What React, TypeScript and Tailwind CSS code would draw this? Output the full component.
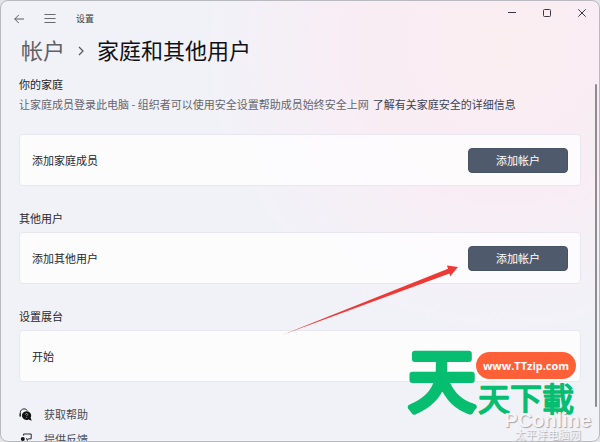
import type { ReactNode } from 'react';

const ArrowLeftIcon = () => (
  <svg width="12" height="12" viewBox="0 0 12 12" fill="none" stroke="#5b5b61" strokeLinecap="round" strokeLinejoin="round">
    <path d="M5.5 2.2L1.8 6L5.5 9.8" />
    <path d="M2 6H10.6" />
  </svg>
);

const MenuIcon = () => (
  <svg width="12" height="12" viewBox="0 0 12 12" stroke="#6a6a70" strokeLinecap="round">
    <path d="M0.8 1.5H11.2M0.8 5.5H11.2M0.8 9.5H11.2" />
  </svg>
);

// ヘルプ（ヘッドセットと吹き出し）
const HelpIcon = () => (
  <svg width="13" height="13" viewBox="0 0 13 13">
    <path d="M1.3 8.2V4.8C1.3 2.4 3 0.9 5 0.9C6.6 0.9 7.7 1.5 8.3 2.6" fill="none" stroke="#2a2a2e" />
    <path d="M0.5 5.6H2V8.6H0.5Z" fill="#2a2a2e" />
    <path d="M7.6 3.2a4.4 4.4 0 1 0 1.8 8.3l3.4 1.2l-1.2-3A4.4 4.4 0 0 0 7.6 3.2Z" fill="#121214" />
    <path d="M6.4 6.5C6.4 5.1 8.7 5.1 8.7 6.5C8.7 7.2 7.6 7.2 7.6 8.2M7.6 9.1V9.9" fill="none" stroke="#b8b8bc" strokeWidth="0.8" />
  </svg>
);

// フィードバック（人と吹き出し）
const FeedbackIcon = () => (
  <svg width="13" height="13" viewBox="0 0 13 13">
    <path d="M4.6 2.6V1H12.2V5.8H9.8L8.2 7.4V5.8H7" fill="none" stroke="#2a2a2e" strokeLinejoin="round" />
    <circle cx="3.8" cy="5.9" r="2" fill="#121214" />
    <path d="M0.8 9H6.8V10.4C6.8 13 0.8 13 0.8 10.4Z" fill="#121214" />
  </svg>
);

// サイトロゴ
const SiteLogo = ({ className }: { className?: string }) => (
  <svg width="174" height="100" viewBox="0 0 174 100" className={className} textAnchor="middle">
    <g
      className="font-['Noto_Sans_CJK_TC',sans-serif]"
      fill="#06bd70"
      stroke="#06bd70"
      strokeLinecap="round"
      strokeLinejoin="round"
    >
      <text x="37" y="75" fontSize="68" strokeWidth="6">天</text>
      <text x="121" y="80" fontSize="32" strokeWidth="1.6">天下載</text>
    </g>
    <rect x="71" y="21" width="100" height="27" rx="13.5" fill="#ff6038" />
    <text x="121" y="39" fontSize="11" fontWeight="700" fill="#fff" className="font-['Open_Sans',sans-serif]">
      www.TTzip.com
    </text>
  </svg>
);

const captionButtons = [
  { label: '最小化', path: 'M1 4.5H9' },
  { label: '最大化', path: 'M2.5 1.5H7.5A1 1 0 0 1 8.5 2.5V7.5A1 1 0 0 1 7.5 8.5H2.5A1 1 0 0 1 1.5 7.5V2.5A1 1 0 0 1 2.5 1.5Z' },
  { label: '关闭', path: 'M1.3 1.3L8.7 8.7M8.7 1.3L1.3 8.7' },
];

const footerLinks = [
  { label: '获取帮助', icon: HelpIcon },
  { label: '提供反馈', icon: FeedbackIcon },
];

const AddButton = () => (
  <button type="button" className="h-[25px] w-[100px] rounded-[4px] border border-[#465364] bg-[#4f5b6c] text-white">
    添加帐户
  </button>
);

const Card = ({ label, children }: { label: string; children?: ReactNode }) => (
  <div className="flex h-[52px] items-center justify-between rounded-[4px] border border-[#e8e7ef] bg-white/75 px-3 text-[#27272b]">
    <span>{label}</span>
    {children}
  </div>
);

export default function App() {
  return (
    <div className="h-screen bg-[#e4e4e8] font-['Noto_Sans_CJK_SC',sans-serif] text-[11px] leading-5">
      <div className="relative flex h-full flex-col overflow-hidden rounded-lg border border-[#b9b9c0] bg-[#f1f2f8] bg-[radial-gradient(ellipse_300px_290px_at_84%_10%,#faeef1_0%,#f9edf5_50%,#f1f2f800_100%)]">
        {/* タイトルバー */}
        <header className="flex items-start justify-between">
          <div className="flex h-9 items-center pl-3">
            <button type="button" aria-label="返回"><ArrowLeftIcon /></button>
            <button type="button" aria-label="菜单" className="ml-[19px]"><MenuIcon /></button>
            <span className="ml-5 text-[9px] text-[#3a3a3e]">设置</span>
          </div>
          <div className="flex h-6 items-center gap-[25px] pr-3">
            {captionButtons.map((button) => (
              <button key={button.label} type="button" aria-label={button.label}>
                <svg width="10" height="10" viewBox="0 0 10 10" fill="none" stroke="#3c3640">
                  <path d={button.path} />
                </svg>
              </button>
            ))}
          </div>
        </header>

        <main className="px-[18px]">
          <h1 className="flex h-6 items-center pl-[2px] text-[22px]">
            <a href="#accounts" className="text-[#606066]">帐户</a>
            <svg className="mx-3 mt-1" width="8" height="10" viewBox="0 0 8 10" fill="none" stroke="#55555a" strokeWidth="1.2">
              <path d="M2 1L6 5L2 9" />
            </svg>
            <span className="text-[#111114]">家庭和其他用户</span>
          </h1>

          {/* 家族 */}
          <section className="mt-[13px]">
            <h2 className="text-[#1c1c20]">你的家庭</h2>
            <p className="mb-5 whitespace-nowrap text-[#65656b]">
              让家庭成员登录此电脑 - 组织者可以使用安全设置帮助成员始终安全上网
              <a href="#family" className="ml-1 text-[#3d4250]">了解有关家庭安全的详细信息</a>
            </p>
            <Card label="添加家庭成员"><AddButton /></Card>
          </section>

          {/* その他のユーザー */}
          <section className="mt-[22px]">
            <h2 className="mb-1 text-[#27272b]">其他用户</h2>
            <Card label="添加其他用户"><AddButton /></Card>
          </section>

          {/* キオスク */}
          <section className="mt-[22px]">
            <h2 className="mb-1 text-[#27272b]">设置展台</h2>
            <Card label="开始" />
          </section>

          <nav className="mt-[22px] flex flex-col items-start gap-[5px]">
            {footerLinks.map((link) => {
              const Icon = link.icon;
              return (
                <a key={link.label} href="#support" className="flex items-center gap-3 text-[#454b5b]">
                  <Icon />
                  {link.label}
                </a>
              );
            })}
          </nav>
        </main>

        {/* スクロールバー */}
        <div className="absolute top-[83px] right-[2px] h-[323px] w-[2px] rounded-full bg-[#8d8b93]" />

        {/* 矢印 */}
        <svg className="absolute top-[263px] right-[141px]" width="176" height="71" viewBox="0 0 176 71">
          <path d="M0 71L167.5 9.5L168 12.5L176 3L165 1.5L166 4.8Z" fill="#ee3a36" />
        </svg>

        <SiteLogo className="absolute right-[20px] bottom-[10px]" />

        {/* 透かし */}
        <div className="absolute right-[8px] bottom-[2px] flex flex-col items-center text-[#f6f4f8] [text-shadow:1px_1px_1px_#00000050]">
          <span className="font-['Liberation_Sans',sans-serif] text-[20px] leading-[18px] font-bold">PConline</span>
          <span className="text-[11px] leading-[10px]">太平洋电脑网</span>
        </div>
      </div>
    </div>
  );
}
